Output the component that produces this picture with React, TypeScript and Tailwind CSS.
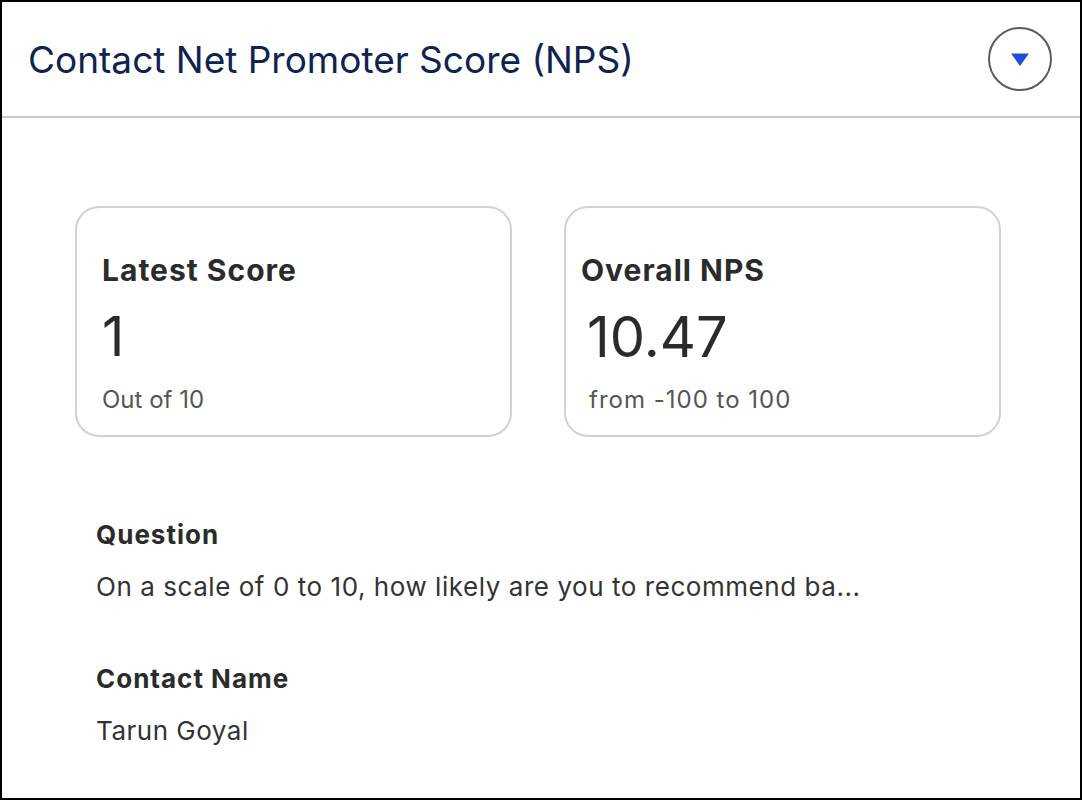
export default function App() {
  return (
    <div
      className="w-[1082px] h-[800px] border-2 border-black bg-white flex flex-col text-[#2b2b2b]"
      style={{ fontFamily: "Inter, 'Noto Sans', sans-serif" }}
    >
      <div className="h-[116px] shrink-0 border-b-2 border-[#c9c9c9] flex items-center justify-between pl-[26px] pr-[28px]">
        <h1 className="text-[37px] leading-none text-[#0e2350]">
          Contact Net Promoter Score (NPS)
        </h1>
        <button className="w-[64px] h-[64px] rounded-full border-2 border-[#5c5c5c] flex items-center justify-center">
          <svg width="20" height="15" viewBox="0 0 20 15">
            <path d="M1 1.5 H19 L10 14 Z" fill="#1f4fd8" />
          </svg>
        </button>
      </div>

      <div className="flex gap-[52px] pl-[73px] pt-[88px]">
        <div className="w-[437px] h-[231px] rounded-[24px] border-2 border-[#d2d2d2] pl-[25px] pt-[47px]">
          <div className="text-[30px] font-bold leading-none tracking-[1px]">Latest Score</div>
          <div className="text-[55px] leading-none mt-[24px]">1</div>
          <div className="text-[24px] leading-none text-[#555] mt-[24px]">Out of 10</div>
        </div>
        <div className="w-[437px] h-[231px] rounded-[24px] border-2 border-[#d2d2d2] pl-[15px] pt-[47px]">
          <div className="text-[30px] font-bold leading-none tracking-[1px]">Overall NPS</div>
          <div className="text-[56px] leading-none mt-[24px] pl-[6px]">10.47</div>
          <div className="text-[24px] leading-none text-[#555] mt-[23px] pl-[8px] tracking-[1px]">
            from -100 to 100
          </div>
        </div>
      </div>

      <div className="pl-[94px] pt-[85px] flex flex-col">
        <div className="text-[26px] font-bold leading-none tracking-[1px]">Question</div>
        <div className="text-[26px] leading-none mt-[26px] text-[#333] tracking-[0.55px]">
          On a scale of 0 to 10, how likely are you to recommend ba...
        </div>
        <div className="text-[26px] font-bold leading-none mt-[66px] tracking-[1px]">Contact Name</div>
        <div className="text-[26px] leading-none mt-[26px] text-[#333] tracking-[0.5px]">Tarun Goyal</div>
      </div>
    </div>
  );
}
